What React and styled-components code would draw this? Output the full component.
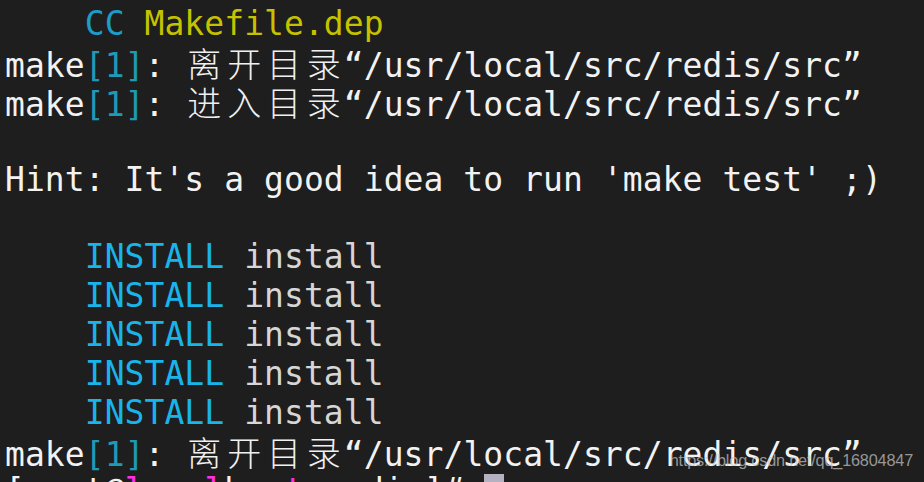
import React from "react";
import styled, { createGlobalStyle } from "styled-components";

const Global = createGlobalStyle`
    html, body {
        margin: 0;
        padding: 0;
        background: #1e1e1e;
        overflow: hidden;
    }
`

const Terminal = styled.main`
    position: relative;
    width: 924px;
    height: 482px;
    overflow: hidden;
    box-sizing: border-box;
    padding: 5px 0 0 5px;
    background: #1e1e1e;
    font-family: "DejaVu Sans Mono", "Noto Sans CJK SC", monospace;
    font-size: 33px;
    letter-spacing: 0.06px;
    color: #f2f2f2;
`
const Line = styled.div`
    height: 38.9px;
    line-height: 38.9px;
    white-space: pre;
`
const Txt = styled.span`
    color: ${(p) => p.$c || "inherit"};
`
const Wide = styled.span`
    display: inline-block;
    width: 39.86px;
    text-align: center;
    font-family: "Noto Sans CJK SC", sans-serif;
    font-weight: 300;
    font-size: 34px;
    color: #f0f0f0;
`
const Cursor = styled.span`
    display: inline-block;
    width: 20px;
    height: 34px;
    vertical-align: -6px;
    background: #b4b2c0;
`
const Watermark = styled.div`
    position: absolute;
    right: 11px;
    top: 451px;
    font-family: "Liberation Sans", Arial, sans-serif;
    font-size: 16.3px;
    letter-spacing: -0.2px;
    color: rgba(200, 200, 200, 0.72);
    white-space: nowrap;
`

const colors = {
    cc: "#1d9bc9",
    file: "#c6c200",
    num: "#1e9ab8",
    inst: "#19b4ea",
    dim: "#d6d6d6",
    pink: "#ff2ee8",
}

const Cjk = ({ text }) => text.split("").map((ch, i) => <Wide key={i}>{ch}</Wide>)

const MakeLine = ({ verb }) => (
    <Line>
        make<Txt $c={colors.num}>[1]</Txt>: <Cjk text={verb} />“/usr/local/src/redis/src”
    </Line>
)

const InstallLine = () => (
    <Line>
        {"    "}<Txt $c={colors.inst}>INSTALL</Txt> <Txt $c={colors.dim}>install</Txt>
    </Line>
)

// prompt: only the tops of it show at the bottom edge
const prompt = "[root@localhost redis]# "
const pinkAt = [6, 10, 14]

const App = () => {
    return (
        <Terminal>
            <Global />
            <Line>
                {"    "}<Txt $c={colors.cc}>CC</Txt> <Txt $c={colors.file}>Makefile.dep</Txt>
            </Line>
            <MakeLine verb="离开目录" />
            <MakeLine verb="进入目录" />
            <Line />
            <Line>Hint: It's a good idea to run 'make test' ;)</Line>
            <Line />
            {[0, 1, 2, 3, 4].map((i) => <InstallLine key={i} />)}
            <MakeLine verb="离开目录" />
            <Line>
                {prompt.split("").map((ch, i) => (
                    <Txt key={i} $c={pinkAt.includes(i) ? colors.pink : undefined}>{ch}</Txt>
                ))}
                <Cursor />
            </Line>
            <Watermark>https://blog.csdn.net/qq_16804847</Watermark>
        </Terminal>
    )
}
export default App;
